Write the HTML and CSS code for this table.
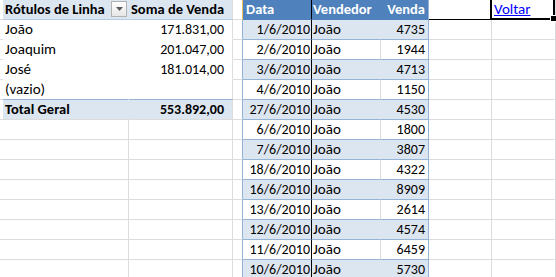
FILE: index.html
```html
<!DOCTYPE html>
<html>
<head>
<meta charset="utf-8">
<link rel="stylesheet" href="styles.css">
</head>
<body>
<div class="sheet">
  <!-- row 0 -->
  <div class="c zh"></div>
  <div class="c ph pa b"><span>Rótulos de Linha</span><span class="sortbtn"><svg width="7" height="4" viewBox="0 0 7 4"><path d="M0 0H7L3.5 4Z" fill="#5b5b5b"/></svg></span></div>
  <div class="c ph pb b">Soma de Venda</div>
  <div class="c tc th-edge"></div>
  <div class="c th td b">Data</div>
  <div class="c th te b">Vendedor</div>
  <div class="c th tf b r">Venda</div>
  <div class="c g0"></div>
  <div class="c g0 voltar"><a href="#">Voltar</a></div>

  <!-- row 1 -->
  <div class="c zw"></div>
  <div class="c pr pa">João</div>
  <div class="c pr pb r n">171.831,00</div>
  <div class="c tc"></div>
  <div class="c tl td r n">1/6/2010</div>
  <div class="c tl te">João</div>
  <div class="c tl tf r n">4735</div>
  <div class="c"></div>
  <div class="c"></div>

  <!-- row 2 -->
  <div class="c zw"></div>
  <div class="c pr pa">Joaquim</div>
  <div class="c pr pb r n">201.047,00</div>
  <div class="c tc"></div>
  <div class="c tw td r n">2/6/2010</div>
  <div class="c tw te">João</div>
  <div class="c tw tf r n">1944</div>
  <div class="c"></div>
  <div class="c"></div>

  <!-- row 3 -->
  <div class="c zw"></div>
  <div class="c pr pa">José</div>
  <div class="c pr pb r n">181.014,00</div>
  <div class="c tc"></div>
  <div class="c tl td r n">3/6/2010</div>
  <div class="c tl te">João</div>
  <div class="c tl tf r n">4713</div>
  <div class="c"></div>
  <div class="c"></div>

  <!-- row 4 -->
  <div class="c zw zlast"></div>
  <div class="c pr pa plast">(vazio)</div>
  <div class="c pr pb plast r"></div>
  <div class="c tc"></div>
  <div class="c tw td r n">4/6/2010</div>
  <div class="c tw te">João</div>
  <div class="c tw tf r n">1150</div>
  <div class="c"></div>
  <div class="c"></div>

  <!-- row 5 -->
  <div class="c zh"></div>
  <div class="c pt pa b">Total Geral</div>
  <div class="c pt pb b r n">553.892,00</div>
  <div class="c tc"></div>
  <div class="c tl td r n">27/6/2010</div>
  <div class="c tl te">João</div>
  <div class="c tl tf r n">4530</div>
  <div class="c"></div>
  <div class="c"></div>

  <!-- row 6 -->
  <div class="c"></div><div class="c"></div><div class="c"></div>
  <div class="c tc"></div>
  <div class="c tw td r n">6/6/2010</div>
  <div class="c tw te">João</div>
  <div class="c tw tf r n">1800</div>
  <div class="c"></div><div class="c"></div>

  <!-- row 7 -->
  <div class="c"></div><div class="c"></div><div class="c"></div>
  <div class="c tc"></div>
  <div class="c tl td r n">7/6/2010</div>
  <div class="c tl te">João</div>
  <div class="c tl tf r n">3807</div>
  <div class="c"></div><div class="c"></div>

  <!-- row 8 -->
  <div class="c"></div><div class="c"></div><div class="c"></div>
  <div class="c tc"></div>
  <div class="c tw td r n">18/6/2010</div>
  <div class="c tw te">João</div>
  <div class="c tw tf r n">4322</div>
  <div class="c"></div><div class="c"></div>

  <!-- row 9 -->
  <div class="c"></div><div class="c"></div><div class="c"></div>
  <div class="c tc"></div>
  <div class="c tl td r n">16/6/2010</div>
  <div class="c tl te">João</div>
  <div class="c tl tf r n">8909</div>
  <div class="c"></div><div class="c"></div>

  <!-- row 10 -->
  <div class="c"></div><div class="c"></div><div class="c"></div>
  <div class="c tc"></div>
  <div class="c tw td r n">13/6/2010</div>
  <div class="c tw te">João</div>
  <div class="c tw tf r n">2614</div>
  <div class="c"></div><div class="c"></div>

  <!-- row 11 -->
  <div class="c"></div><div class="c"></div><div class="c"></div>
  <div class="c tc"></div>
  <div class="c tl td r n">12/6/2010</div>
  <div class="c tl te">João</div>
  <div class="c tl tf r n">4574</div>
  <div class="c"></div><div class="c"></div>

  <!-- row 12 -->
  <div class="c"></div><div class="c"></div><div class="c"></div>
  <div class="c tc"></div>
  <div class="c tw td r n">11/6/2010</div>
  <div class="c tw te">João</div>
  <div class="c tw tf r n">6459</div>
  <div class="c"></div><div class="c"></div>

  <!-- row 13 -->
  <div class="c"></div><div class="c"></div><div class="c"></div>
  <div class="c tc"></div>
  <div class="c tl td r n">10/6/2010</div>
  <div class="c tl te">João</div>
  <div class="c tl tf r n">5730</div>
  <div class="c"></div><div class="c"></div>

  <div class="selection"><span class="handle"></span></div>
</div>
</body>
</html>
```

FILE: styles.css
```css
html, body {
  margin: 0;
  padding: 0;
  background: #ffffff;
  overflow: hidden;
}

body {
  font-family: Calibri, Carlito, Lato, "Liberation Sans", sans-serif;
  font-size: 15px;
  color: #000;
}

.sheet {
  position: relative;
  display: grid;
  grid-template-columns: 3px 126px 104px 10px 69px 69px 48px 63px 64px;
  grid-auto-rows: 20px;
  width: 556px;
}

.c {
  box-sizing: border-box;
  border-right: 1px solid #dadcdd;
  border-bottom: 1px solid #dadcdd;
  line-height: 19px;
  padding: 0 2px;
  white-space: nowrap;
  overflow: hidden;
  background: #fff;
}

.r { text-align: right; }
.b { font-weight: bold; font-size: 14.5px; }
.n { font-size: 14px; }

/* sliver column left of the pivot */
.zh { border-right-color: #dce6f1; }
.zw { border-right-color: #fff; }

/* pivot table */
.ph {
  background: #dce6f1;
  border-bottom-color: #b8cce4;
}
.ph.pa {
  border-right-color: #dce6f1;
  display: flex;
  justify-content: space-between;
  align-items: flex-start;
  padding-right: 1px;
}
.ph.pb { padding-left: 2px; }

.sortbtn {
  box-sizing: border-box;
  width: 16px;
  height: 16px;
  margin-top: 1px;
  border: 1px solid #b2b2b2;
  background: linear-gradient(#ffffff, #e6e6e6);
  display: flex;
  align-items: center;
  justify-content: center;
}

.pr { border-bottom-color: #fff; }
.pr.pa { border-right-color: #fff; }
.pr.plast { border-bottom-color: #95b3d7; }
.pb.r { padding-right: 8px; }

.pt { background: #dce6f1; }
.pt.pa { border-right-color: #dce6f1; }

/* excel table */
.tc { border-right-color: #95b3d7; }
.th-edge { border-right-color: #f0c05a; }

.th {
  background: #4f81bd;
  color: #fff;
  border-bottom-color: #4f81bd;
  border-right-color: #4f81bd;
}
.tl {
  background: #dce6f1;
  border-bottom-color: #95b3d7;
  border-right-color: #dce6f1;
}
.tw {
  background: #fff;
  border-bottom-color: #95b3d7;
}

.td { border-right-color: #000; padding-right: 1px; }
.td.th { border-right-color: #000; padding-left: 3px; }
.te { padding-left: 1px; }
.tf { border-right-color: #95b3d7; padding-right: 3px; }
.th.tf { padding-right: 3px; }

.g0 { border-bottom-color: #000; }

.voltar a {
  color: #0000ff;
  text-decoration: underline;
}

.selection {
  position: absolute;
  left: 490px;
  top: -2px;
  width: 65px;
  height: 22px;
  box-sizing: border-box;
  border: 2px solid #000;
  pointer-events: none;
}

.handle {
  position: absolute;
  right: -3px;
  bottom: -3px;
  width: 5px;
  height: 5px;
  background: #000;
  box-shadow: 0 0 0 1px #fff;
}
```
